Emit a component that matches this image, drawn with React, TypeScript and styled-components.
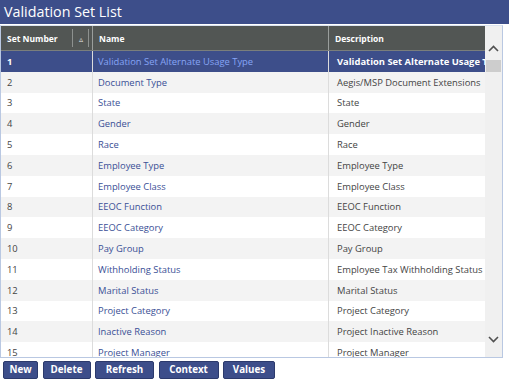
import * as React from 'react';
import styled, { createGlobalStyle } from 'styled-components';

const GlobalStyle = createGlobalStyle`
  html, body { margin: 0; padding: 0; background: #ffffff; }
  body { font-family: 'Open Sans', 'Noto Sans', sans-serif; }
`;

const rows: [string, string, string][] = [
  ['1', 'Validation Set Alternate Usage Type', 'Validation Set Alternate Usage Type'],
  ['2', 'Document Type', 'Aegis/MSP Document Extensions'],
  ['3', 'State', 'State'],
  ['4', 'Gender', 'Gender'],
  ['5', 'Race', 'Race'],
  ['6', 'Employee Type', 'Employee Type'],
  ['7', 'Employee Class', 'Employee Class'],
  ['8', 'EEOC Function', 'EEOC Function'],
  ['9', 'EEOC Category', 'EEOC Category'],
  ['10', 'Pay Group', 'Pay Group'],
  ['11', 'Withholding Status', 'Employee Tax Withholding Status'],
  ['12', 'Marital Status', 'Marital Status'],
  ['13', 'Project Category', 'Project Category'],
  ['14', 'Inactive Reason', 'Project Inactive Reason'],
  ['15', 'Project Manager', 'Project Manager'],
];

const buttons: [string, number][] = [
  ['New', 35],
  ['Delete', 48],
  ['Refresh', 59],
  ['Context', 60],
  ['Values', 52],
];

const Page = styled.div`
  width: 509px;
  height: 382px;
  display: flex;
  flex-direction: column;
  overflow: hidden;
`;

const TitleBar = styled.div`
  height: 24px;
  background: #3d4e8a;
  color: #ffffff;
  font-size: 14.3px;
  line-height: 24px;
  padding-left: 4px;
  flex-shrink: 0;
`;

const Grid = styled.div`
  margin-top: 1px;
  width: 501px;
  height: 331px;
  border: 1px solid #b9c8e2;
  border-top: 1px solid #dbe3f0;
  display: flex;
  overflow: hidden;
`;

const Table = styled.div`
  flex: 1;
  display: flex;
  flex-direction: column;
  overflow: hidden;
`;

const columns = '92px 236px 1fr';

const HeaderRow = styled.div`
  height: 24px;
  display: grid;
  grid-template-columns: ${columns};
  background: #525654;
  flex-shrink: 0;
  border-bottom: 1px solid #7a7e7c;
`;

const HeaderCell = styled.div<{ last?: boolean }>`
  display: flex;
  align-items: center;
  color: #ffffff;
  font-size: 8.5px;
  font-weight: 700;
  padding-left: 6px;
  border-right: ${({ last }) => (last ? 'none' : '1px solid #9a9e9c')};
  white-space: nowrap;
`;

const HeaderLabel = styled.span`
  flex: 1;
`;

const SortBox = styled.span`
  width: 15px;
  height: 18px;
  margin-right: 3px;
  border-left: 1px solid #8d918f;
  border-right: 1px solid #8d918f;
  display: flex;
  align-items: center;
  justify-content: center;
  font-size: 8px;
  font-weight: 400;
  color: #e8e8e8;
`;

const Body = styled.div`
  flex: 1;
  overflow: hidden;
`;

const Row = styled.div<{ alt: boolean; selected: boolean }>`
  height: 20.8px;
  display: grid;
  grid-template-columns: ${columns};
  background: ${({ alt, selected }) => (selected ? '#3d4e8a' : alt ? '#f3f3f3' : '#ffffff')};
`;

const Cell = styled.div<{ selected: boolean; last?: boolean }>`
  display: flex;
  align-items: center;
  padding-left: ${({ last }) => (last ? 8 : 6)}px;
  font-size: 9.4px;
  white-space: nowrap;
  overflow: hidden;
  color: ${({ selected }) => (selected ? '#ffffff' : '#444444')};
  font-weight: ${({ selected }) => (selected ? 700 : 400)};
  border-right: ${({ last }) => (last ? 'none' : '1px solid #dcdcdc')};
`;

const NameCell = styled(Cell)`
  color: ${({ selected }) => (selected ? '#86a4f5' : '#3a4f96')};
  padding-left: 5px;
  font-weight: ${({ selected }) => (selected ? 500 : 400)};
`;

const Scrollbar = styled.div`
  width: 17px;
  background: #f0f0f0;
  display: flex;
  flex-direction: column;
  align-items: center;
  flex-shrink: 0;
`;

const ScrollArrow = styled.div<{ top?: number }>`
  height: 24px;
  width: 17px;
  margin-top: ${({ top }) => top ?? 0}px;
  display: flex;
  align-items: center;
  justify-content: center;
`;

const ScrollTrack = styled.div<{ fixed?: number }>`
  flex: ${({ fixed }) => (fixed ? `0 0 ${fixed}px` : '1')};
  width: 17px;
`;

const ScrollThumb = styled.div`
  width: 15px;
  height: 12px;
  margin: 0 auto;
  background: #cdcdcd;
`;

const ButtonBar = styled.div`
  display: flex;
  gap: 4.5px;
  padding: 3px 0 0 3px;
`;

const ActionButton = styled.button<{ w: number }>`
  width: ${({ w }) => w}px;
  height: 18px;
  padding: 0;
  background: #3d4e8a;
  border: 1px solid #2c3a6c;
  border-radius: 2px;
  color: #ffffff;
  font-family: 'Open Sans', 'Noto Sans', sans-serif;
  font-size: 9.8px;
  font-weight: 700;
  line-height: 16px;
  cursor: pointer;
`;

const Chevron = ({ up }: { up?: boolean }) => (
  <svg width="11" height="7" viewBox="0 0 11 7">
    <path
      d={up ? 'M1 6 L5.5 1.5 L10 6' : 'M1 1 L5.5 5.5 L10 1'}
      fill="none"
      stroke="#505050"
      strokeWidth="1.6"
    />
  </svg>
);

export default function App() {
  return (
    <Page>
      <GlobalStyle />
      <TitleBar>Validation Set List</TitleBar>
      <Grid>
        <Table>
          <HeaderRow>
            <HeaderCell>
              <HeaderLabel>Set Number</HeaderLabel>
              <SortBox>▵</SortBox>
            </HeaderCell>
            <HeaderCell>Name</HeaderCell>
            <HeaderCell last>Description</HeaderCell>
          </HeaderRow>
          <Body>
            {rows.map(([num, name, desc], i) => {
              const selected = i === 0;
              return (
                <Row key={num} alt={i % 2 === 1} selected={selected}>
                  <Cell selected={selected}>{num}</Cell>
                  <NameCell selected={selected}>{name}</NameCell>
                  <Cell selected={selected} last>{desc}</Cell>
                </Row>
              );
            })}
          </Body>
        </Table>
        <Scrollbar>
          <ScrollArrow top={10}>
            <Chevron up />
          </ScrollArrow>
          <ScrollTrack>
            <ScrollThumb />
          </ScrollTrack>
          <ScrollArrow>
            <Chevron />
          </ScrollArrow>
          <ScrollTrack fixed={6} />
        </Scrollbar>
      </Grid>
      <ButtonBar>
        {buttons.map(([label, w]) => (
          <ActionButton key={label} w={w}>
            {label}
          </ActionButton>
        ))}
      </ButtonBar>
    </Page>
  );
}
